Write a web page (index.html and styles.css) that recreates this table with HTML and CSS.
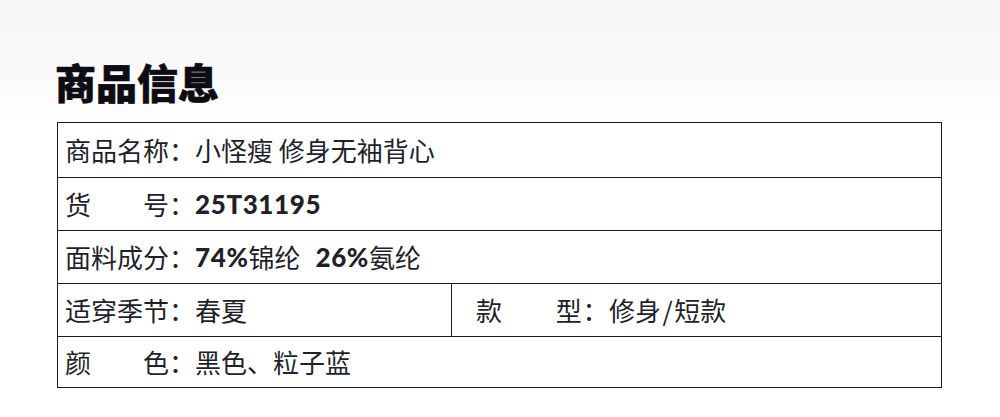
FILE: index.html
```html
<!DOCTYPE html>
<html lang="zh-CN">
<head>
<meta charset="utf-8">
<title>商品信息</title>
<link rel="stylesheet" href="styles.css">
</head>
<body>
<div class="page">
  <h1 class="title">商品信息</h1>
  <div class="info">
    <div class="row r1">
      <div class="cell"><span class="label">商品名称：</span><span class="val">小怪瘦 修身无袖背心</span></div>
    </div>
    <div class="row r2">
      <div class="cell"><span class="label">货　　号：</span><span class="num">25T31195</span></div>
    </div>
    <div class="row r3">
      <div class="cell"><span class="label">面料成分：</span><span class="num">74%</span><span class="val">锦纶</span><span class="num gap">26%</span><span class="val">氨纶</span></div>
    </div>
    <div class="row r4 split">
      <div class="cell left"><span class="label">适穿季节：</span><span class="val">春夏</span></div>
      <div class="cell right"><span class="label wide">款　　型：</span><span class="val">修身<span class="slash">/</span>短款</span></div>
    </div>
    <div class="row r5">
      <div class="cell"><span class="label">颜　　色：</span><span class="val">黑色、粒子蓝</span></div>
    </div>
  </div>
</div>
</body>
</html>
```
FILE: styles.css
```css
html, body {
  margin: 0;
  padding: 0;
}
body {
  width: 1000px;
  height: 417px;
  background: linear-gradient(180deg, #f6f6f9 0px, #f9f9fb 60px, #ffffff 125px);
  font-family: "Noto Sans CJK SC", "Noto Sans", sans-serif;
  color: #221f2a;
  overflow: hidden;
}
.page {
  padding: 61px 0 0 57px;
}
.title {
  margin: 0 0 21px -2px;
  font-size: 41px;
  line-height: 40px;
  font-weight: 900;
  color: #0d0c12;
  letter-spacing: 0;
  -webkit-text-stroke: 0.7px #0d0c12;
}
.info {
  width: 883px;
  border: 1px solid #1d1b26;
  border-bottom: none;
  background: #ffffff;
}
.row {
  display: flex;
  border-bottom: 1px solid #1d1b26;
}
.r1 { height: 54px; }
.r2 { height: 52px; }
.r3 { height: 52px; }
.r4 { height: 52px; }
.r5 { height: 50px; }
.cell {
  display: flex;
  align-items: center;
  padding-left: 7px;
  font-size: 26px;
  line-height: 1;
  white-space: nowrap;
}
.split .left {
  width: 386px;
  border-right: 1px solid #1d1b26;
}
.split .right {
  padding-left: 24px;
}
.wide {
  letter-spacing: 0.6px;
}
.slash {
  margin: 0 1.5px;
}
.num {
  font-family: "Lato", "Noto Sans", sans-serif;
  font-weight: 900;
  font-size: 26px;
  letter-spacing: 0.6px;
}
.gap {
  margin-left: 15px;
}
```
